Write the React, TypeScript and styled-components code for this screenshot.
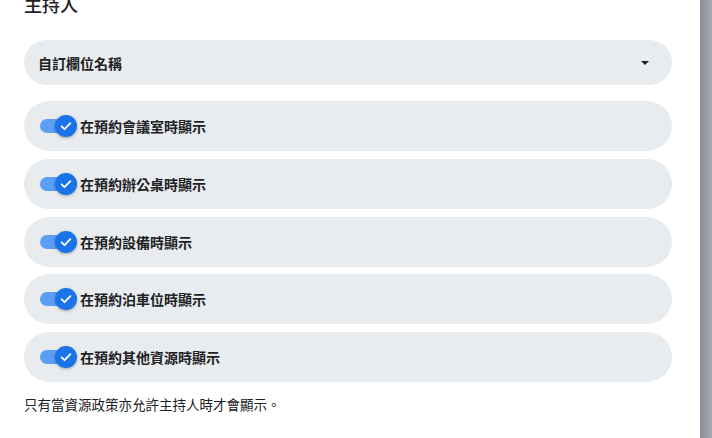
import styled, { createGlobalStyle } from 'styled-components'

const GlobalStyle = createGlobalStyle`
  html, body {
    margin: 0;
    padding: 0;
    background: #ffffff;
    font-family: Roboto, "Noto Sans CJK TC", sans-serif;
    color: #202124;
  }
`

const Page = styled.div`
  display: flex;
  width: 712px;
  height: 438px;
  overflow: hidden;
`

const Panel = styled.div`
  flex: 1;
  padding: 0 28px 0 24px;
  display: flex;
  flex-direction: column;
  margin-top: -6px;
`

const Scrim = styled.div`
  width: 12px;
  background: linear-gradient(to right, #8a8f98, #a4a8af);
`

const Title = styled.h2`
  margin: 0;
  font-size: 18px;
  font-weight: 500;
  line-height: 24px;
`

const Select = styled.div`
  margin-top: 22px;
  height: 45px;
  border-radius: 23px;
  background: #e9ecef;
  display: flex;
  align-items: center;
  justify-content: space-between;
  padding: 0 23px 0 14px;
  font-size: 14px;
  font-weight: 700;
`

const Caret = styled.span`
  width: 0;
  height: 0;
  border-left: 4px solid transparent;
  border-right: 4px solid transparent;
  border-top: 4px solid #202124;
`

const List = styled.div`
  margin-top: 16px;
  display: flex;
  flex-direction: column;
  gap: 7.75px;
`

const Row = styled.div`
  height: 50px;
  border-radius: 25px;
  background: #e9ecef;
  display: flex;
  align-items: center;
  padding-left: 16px;
  gap: 4px;
  font-size: 14px;
  font-weight: 700;
`

const Switch = styled.span<{ on: boolean }>`
  position: relative;
  width: 36px;
  height: 20px;
  display: inline-block;

  &::before {
    content: '';
    position: absolute;
    left: 0;
    top: 3px;
    width: 34px;
    height: 14px;
    border-radius: 7px;
    background: ${(p) => (p.on ? '#5a9ef5' : '#bdc1c6')};
  }
`

const Thumb = styled.span`
  position: absolute;
  right: -1px;
  top: -1px;
  width: 22px;
  height: 22px;
  border-radius: 50%;
  background: #1a73e8;
  box-shadow: 0 1px 3px rgba(0, 0, 0, 0.3);
  display: flex;
  align-items: center;
  justify-content: center;
`

const Note = styled.p`
  margin: 12px 0 0;
  font-size: 13.5px;
  font-weight: 400;
`

const rows = [
  '在預約會議室時顯示',
  '在預約辦公桌時顯示',
  '在預約設備時顯示',
  '在預約泊車位時顯示',
  '在預約其他資源時顯示',
]

const App = () => {
  return (
    <>
      <GlobalStyle />
      <Page>
        <Panel>
          <Title>主持人</Title>
          <Select>
            自訂欄位名稱
            <Caret />
          </Select>
          <List>
            {rows.map((label) => (
              <Row key={label}>
                <Switch on>
                  <Thumb>
                    <svg width="14" height="14" viewBox="0 0 24 24">
                      <path
                        d="M4.5 12.5l5 5 10-10.5"
                        fill="none"
                        stroke="#fff"
                        strokeWidth="3"
                        strokeLinecap="round"
                        strokeLinejoin="round"
                      />
                    </svg>
                  </Thumb>
                </Switch>
                {label}
              </Row>
            ))}
          </List>
          <Note>只有當資源政策亦允許主持人時才會顯示。</Note>
        </Panel>
        <Scrim />
      </Page>
    </>
  )
}

export default App
